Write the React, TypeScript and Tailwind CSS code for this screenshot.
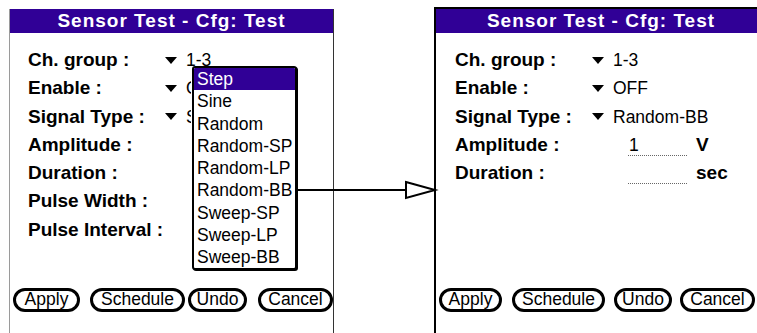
import React from 'react';

const FONT = { fontFamily: '"Liberation Sans", Arial, sans-serif' };

function Caret() {
  return (
    <svg width="12" height="7" viewBox="0 0 12 7" className="shrink-0">
      <polygon points="0,0 12,0 6,7" fill="#000" />
    </svg>
  );
}

function Row({ label, children }: { label: string; children?: React.ReactNode }) {
  return (
    <div className="flex items-center h-[28.3px]">
      <div className="w-[137px] shrink-0 text-[19px] font-bold text-black whitespace-nowrap">{label}</div>
      {children}
    </div>
  );
}

// clipped = value sits under the popup list, only a sliver shows
function Pick({ value, clipped }: { value: string; clipped?: boolean }) {
  return (
    <div className="flex items-center gap-[9px]">
      <Caret />
      <span className={clipped ? 'w-[5px] overflow-hidden whitespace-nowrap text-[17.5px] text-black' : 'text-[17.5px] text-black'}>
        {value}
      </span>
    </div>
  );
}

function Field({ value, unit }: { value: string; unit: string }) {
  return (
    <div className="flex items-end ml-[36px]">
      <div className="w-[59px] h-[22px] border-b border-dotted border-[#666] pl-[1px] text-[17.5px] leading-[22px] text-black">
        {value}
      </div>
      <span className="ml-[9px] text-[19px] font-bold leading-[22px] text-black">{unit}</span>
    </div>
  );
}

function TitleBar() {
  return (
    <div className="h-[24px] bg-[#300096] flex items-center justify-center text-white text-[19px] font-bold tracking-[1px] whitespace-nowrap">
      Sensor Test - Cfg: Test
    </div>
  );
}

function Btn({ label, w }: { label: string; w: string }) {
  return (
    <div className={`${w} h-[24px] border-[3px] border-black rounded-full flex items-center justify-center text-[17.5px] text-black leading-none`}>
      {label}
    </div>
  );
}

const items = ['Step', 'Sine', 'Random', 'Random-SP', 'Random-LP', 'Random-BB', 'Sweep-SP', 'Sweep-LP', 'Sweep-BB'];

export default function App() {
  return (
    <div className="relative w-[757px] h-[333px] overflow-hidden bg-white flex items-start" style={FONT}>
      {/* left screen */}
      <div className="mt-[9px] ml-[9px] w-[328px] h-[324px] border-l border-r border-l-[#9a9a9a] border-r-[#333] flex flex-col">
        <TitleBar />
        <div className="flex-1 pt-[13px] pl-[18px]">
          <Row label="Ch. group :"><Pick value="1-3" /></Row>
          <Row label="Enable :"><Pick value="OFF" clipped /></Row>
          <Row label="Signal Type :"><Pick value="Step" clipped /></Row>
          <Row label="Amplitude :" />
          <Row label="Duration :" />
          <Row label="Pulse Width :" />
          <Row label="Pulse Interval :" />
        </div>
        <div className="flex items-center pl-[3px] mb-[21px]">
          <Btn label="Apply" w="w-[67px]" />
          <div className="ml-[10px]"><Btn label="Schedule" w="w-[95px]" /></div>
          <div className="ml-[3px]"><Btn label="Undo" w="w-[59px]" /></div>
          <div className="ml-[11px]"><Btn label="Cancel" w="w-[75px]" /></div>
        </div>
      </div>

      {/* right screen */}
      <div className="mt-[7px] ml-[100px] w-[332px] h-[326px] shrink-0 border-t-2 border-l-2 border-black flex flex-col">
        <TitleBar />
        <div className="flex-1 pt-[13px] pl-[19px]">
          <Row label="Ch. group :"><Pick value="1-3" /></Row>
          <Row label="Enable :"><Pick value="OFF" /></Row>
          <Row label="Signal Type :"><Pick value="Random-BB" /></Row>
          <Row label="Amplitude :"><Field value="1" unit="V" /></Row>
          <Row label="Duration :"><Field value="" unit="sec" /></Row>
        </div>
        <div className="flex items-center pl-[3px] mb-[21px]">
          <Btn label="Apply" w="w-[63px]" />
          <div className="ml-[10px]"><Btn label="Schedule" w="w-[93px]" /></div>
          <div className="ml-[9px]"><Btn label="Undo" w="w-[58px]" /></div>
          <div className="ml-[8px]"><Btn label="Cancel" w="w-[75px]" /></div>
        </div>
      </div>

      {/* popup list */}
      <div className="absolute left-[192px] top-[66px] w-[105px] h-[204px] bg-white border-2 border-black rounded-[3px] shadow-[1px_1px_0_#000] overflow-hidden">
        {items.map((it, i) => (
          <div
            key={it}
            className={
              i === 0
                ? 'h-[22.3px] pl-[3px] bg-[#300096] text-white text-[17.5px] leading-[22px]'
                : 'h-[22.3px] pl-[3px] text-black text-[17.5px] leading-[22px]'
            }
          >
            {it}
          </div>
        ))}
      </div>

      {/* arrow */}
      <svg className="absolute left-[297px] top-[180px]" width="142" height="20" viewBox="0 0 142 20">
        <line x1="0" y1="10" x2="109" y2="10" stroke="#000" strokeWidth="2" />
        <polygon points="109,2 138,10 109,18" fill="#fff" stroke="#000" strokeWidth="2" />
      </svg>
    </div>
  );
}
